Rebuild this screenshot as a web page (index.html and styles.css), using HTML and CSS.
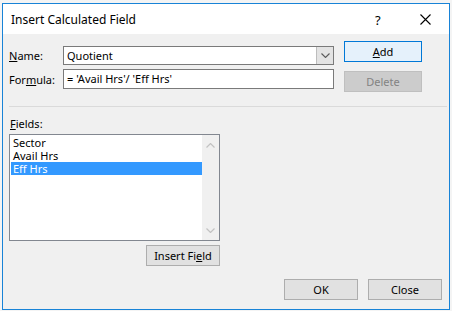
FILE: index.html
```html
<!DOCTYPE html>
<html lang="en">
<head>
    <meta charset="UTF-8">
    <meta name="viewport" content="width=device-width, initial-scale=1.0">
    <title>Insert Calculated Field</title>
    <link rel="stylesheet" href="styles.css">
</head>
<body>
    <div class="dialog">
        <div class="titlebar">
            <span class="title">Insert Calculated Field</span>
            <span class="help">?</span>
            <span class="close">
                <svg width="11" height="11" viewBox="0 0 11 11">
                    <path d="M0.5 0.5 L10.5 10.5 M10.5 0.5 L0.5 10.5" stroke="#000" stroke-width="1.1" fill="none"/>
                </svg>
            </span>
        </div>

        <div class="content">
            <div class="top">
                <div class="form">
                    <div class="row">
                        <label><u>N</u>ame:</label>
                        <div class="combo">
                            <span class="value">Quotient</span>
                            <span class="drop">
                                <svg width="9" height="5" viewBox="0 0 9 5">
                                    <path d="M0.5 0.5 L4.5 4.5 L8.5 0.5" stroke="#5a5a5a" stroke-width="1.1" fill="none"/>
                                </svg>
                            </span>
                        </div>
                    </div>
                    <div class="row">
                        <label>For<u>m</u>ula:</label>
                        <div class="textbox">= 'Avail Hrs'/ 'Eff Hrs'</div>
                    </div>
                </div>
                <div class="side">
                    <button class="btn btn-default"><u>A</u>dd</button>
                    <button class="btn btn-disabled">Delete</button>
                </div>
            </div>

            <div class="sep"></div>

            <div class="fields-label"><u>F</u>ields:</div>
            <div class="listbox">
                <div class="items">
                    <div class="item">Sector</div>
                    <div class="item">Avail Hrs</div>
                    <div class="item selected">Eff Hrs</div>
                </div>
                <div class="scrollbar">
                    <svg width="9" height="5" viewBox="0 0 9 5">
                        <path d="M0.5 4.5 L4.5 0.5 L8.5 4.5" stroke="#c2c2c2" stroke-width="1.2" fill="none"/>
                    </svg>
                    <svg width="9" height="5" viewBox="0 0 9 5">
                        <path d="M0.5 0.5 L4.5 4.5 L8.5 0.5" stroke="#c2c2c2" stroke-width="1.2" fill="none"/>
                    </svg>
                </div>
            </div>
            <div class="insert-row">
                <button class="btn btn-insert">Insert Fi<u>e</u>ld</button>
            </div>

            <div class="footer">
                <button class="btn">OK</button>
                <button class="btn">Close</button>
            </div>
        </div>
    </div>
</body>
</html>
```

FILE: styles.css
```css
body {
    margin: 0;
    background-color: #f4f4f4;
    font-family: 'Noto Sans', 'Segoe UI', sans-serif;
    font-size: 11px;
    color: #000;
}
.dialog {
    box-sizing: border-box;
    width: 448px;
    height: 307px;
    margin: 3px 0 0 2px;
    border: 1px solid #1883d7;
    background: #f0f0f0;
    display: flex;
    flex-direction: column;
}
.titlebar {
    height: 30px;
    background: #fff;
    display: flex;
    align-items: center;
    padding-left: 8px;
}
.title {
    font-size: 12px;
    line-height: 29px;
    flex: 1;
    padding-top: 1px;
}
.help {
    font-size: 13px;
    width: 10px;
    margin-right: 35px;
    padding-top: 1px;
}
.close {
    display: flex;
    width: 11px;
    margin-right: 18px;
    margin-top: 1px;
}
.content {
    flex: 1;
    padding: 7px 7px 0 6px;
}
.top {
    display: flex;
}
.form {
    margin-top: 5px;
    display: flex;
    flex-direction: column;
    gap: 4px;
}
.row {
    display: flex;
    align-items: center;
}
.row label {
    width: 54px;
}
.combo,
.textbox {
    box-sizing: border-box;
    width: 271px;
    border: 1px solid #7a7a7a;
    background: #fff;
}
.combo {
    height: 19px;
    display: flex;
}
.combo .value {
    flex: 1;
    padding-left: 3px;
    line-height: 17px;
}
.drop {
    width: 16px;
    background: #e3e3e3;
    border-left: 1px solid #bdbdbd;
    display: flex;
    align-items: center;
    justify-content: center;
}
.textbox {
    height: 20px;
    padding-left: 3px;
    line-height: 18px;
}
.side {
    margin-left: 10px;
    display: flex;
    flex-direction: column;
    gap: 9px;
}
.btn {
    box-sizing: border-box;
    width: 74px;
    height: 21px;
    padding: 0;
    border: 1px solid #adadad;
    background: #e1e1e1;
    font-family: inherit;
    font-size: 11px;
    color: #000;
}
.side .btn {
    width: 78px;
}
.btn-default {
    border-color: #0078d7;
    background: #e5f1fb;
}
.btn-disabled {
    border-color: #bfbfbf;
    background: #cccccc;
    color: #838383;
}
.sep {
    height: 1px;
    background: #dadada;
    margin: 14px -5px 0 0;
}
.fields-label {
    margin-top: 10px;
    line-height: 13px;
    padding-left: 1px;
}
.listbox {
    box-sizing: border-box;
    width: 211px;
    height: 107px;
    margin-top: 4px;
    border: 1px solid #828790;
    background: #fff;
    display: flex;
}
.items {
    flex: 1;
    padding: 1px 0 0 1px;
}
.item {
    height: 13px;
    line-height: 13px;
    padding-left: 2px;
    overflow: hidden;
}
.item.selected {
    background: #3399ff;
    color: #fff;
}
.scrollbar {
    width: 17px;
    background: #f0f0f0;
    display: flex;
    flex-direction: column;
    align-items: center;
    justify-content: space-between;
    padding: 8px 0 7px;
    box-sizing: border-box;
}
.insert-row {
    width: 211px;
    margin-top: 4px;
    display: flex;
    justify-content: flex-end;
}
.btn-insert {
    width: 74px;
}
.footer {
    margin-top: 13px;
    display: flex;
    justify-content: flex-end;
    gap: 10px;
}
```
